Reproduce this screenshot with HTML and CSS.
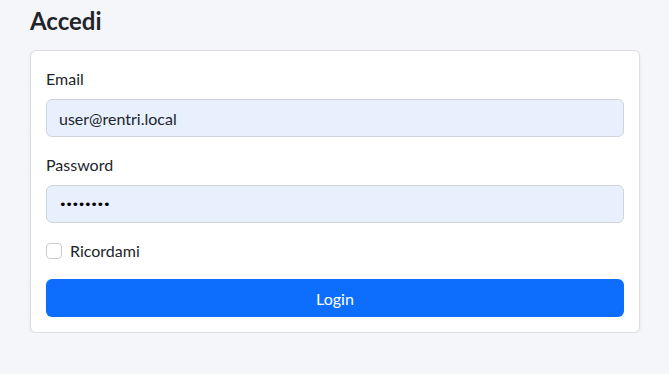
FILE: index.html
```html
<!DOCTYPE html>
<html lang="it">
<head>
  <meta charset="UTF-8" />
  <meta name="viewport" content="width=device-width, initial-scale=1.0"/>
  <title>Accedi</title>
  <link rel="stylesheet" href="styles.css">
</head>
<body>
  <div class="page">
    <h3 class="page-title">Accedi</h3>

    <div class="card">
      <form class="card-body" onsubmit="return false;">
        <div class="field">
          <label for="email" class="form-label">Email</label>
          <input type="email" id="email" class="form-control" value="user@rentri.local" />
        </div>
        <div class="field">
          <label for="password" class="form-label">Password</label>
          <input type="password" id="password" class="form-control" value="password" />
        </div>
        <div class="field form-check">
          <input type="checkbox" id="remember" class="form-check-input" />
          <label for="remember" class="form-check-label">Ricordami</label>
        </div>
        <button type="submit" class="btn-login">Login</button>
      </form>
    </div>
  </div>
</body>
</html>
```

FILE: styles.css
```css
body {
  font-family: 'Lato', 'Open Sans', sans-serif;
  font-size: 16px;
  line-height: 1.5;
  margin: 0;
  padding: 0;
  background-color: #f5f6fa;
  color: #212529;
}

.page {
  padding: 0 29px 0 30px;
}

.page-title {
  margin: 0;
  padding: 7px 0 15px;
  font-size: 24px;
  line-height: 28px;
  font-weight: 700;
  color: #212529;
}

/* Card */
.card {
  background: white;
  border: 1px solid #dcdde1;
  border-radius: 6px;
  box-shadow: 0 2px 4px rgba(0, 0, 0, 0.06);
}

.card-body {
  padding: 16px 15px 15px;
  display: flex;
  flex-direction: column;
}

.field {
  margin-bottom: 16px;
}

.form-label {
  display: block;
  margin-bottom: 8px;
}

.form-control {
  display: block;
  box-sizing: border-box;
  width: 100%;
  height: 38px;
  padding: 6px 12px;
  font-family: inherit;
  font-size: 16px;
  color: #212529;
  background-color: #e8f0fe;
  border: 1px solid #ced4da;
  border-radius: 6px;
  outline: none;
}

input[type="password"].form-control {
  font-family: 'DejaVu Sans', sans-serif;
  font-size: 13px;
  letter-spacing: -1.4px;
  color: #000;
}

/* Checkbox */
.form-check {
  display: flex;
  align-items: center;
  gap: 8px;
  height: 24px;
}

.form-check-input {
  appearance: none;
  margin: 0;
  width: 16px;
  height: 16px;
  border: 1px solid #c9cdd2;
  border-radius: 4px;
  background: white;
}

/* Button */
.btn-login {
  height: 38px;
  font-family: inherit;
  font-size: 16px;
  color: white;
  background-color: #0d6efd;
  border: none;
  border-radius: 6px;
  cursor: pointer;
}

.btn-login:hover {
  background-color: #0b5ed7;
}
```
